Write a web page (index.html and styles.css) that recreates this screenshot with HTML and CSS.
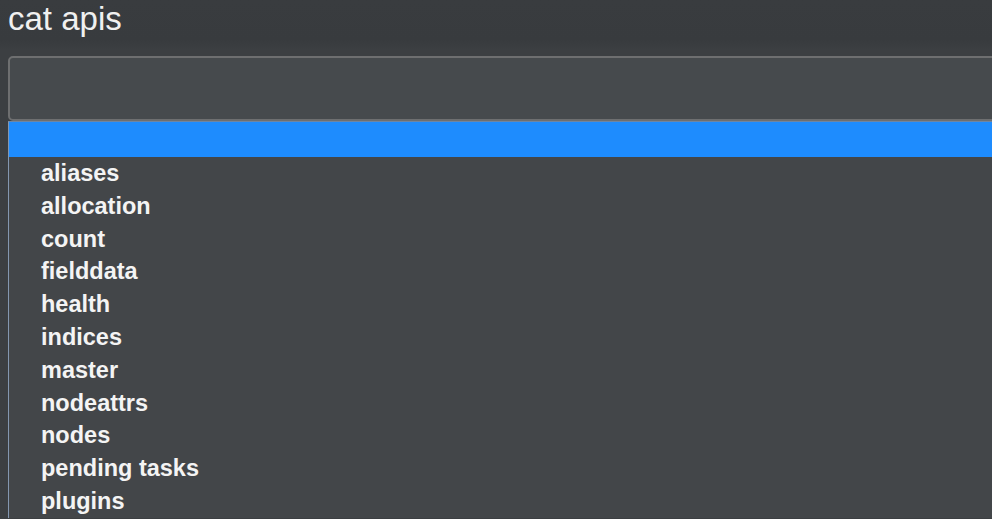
FILE: index.html
```html
<!DOCTYPE html>
<html>
<head>
<meta charset="utf-8">
<link rel="stylesheet" href="styles.css">
</head>
<body>
<div class="page">
  <h1 class="title">cat apis</h1>
  <div class="field"></div>
  <div class="dropdown">
    <div class="opt selected"></div>
    <div class="opt">aliases</div>
    <div class="opt">allocation</div>
    <div class="opt">count</div>
    <div class="opt">fielddata</div>
    <div class="opt">health</div>
    <div class="opt">indices</div>
    <div class="opt">master</div>
    <div class="opt">nodeattrs</div>
    <div class="opt">nodes</div>
    <div class="opt">pending tasks</div>
    <div class="opt">plugins</div>
  </div>
</div>
</body>
</html>
```
FILE: styles.css
```css
html, body {
  margin: 0;
  padding: 0;
  height: 100%;
  overflow: hidden;
}
body {
  background: linear-gradient(#393c3f 0, #383b3e 40px, #3c3f42 50px, #3c3f42 100%);
  font-family: "Liberation Sans", Arial, sans-serif;
  color: #f2f2f2;
}
.page {
  padding-left: 8px;
}
.title {
  margin: 0;
  font-size: 33px;
  font-weight: normal;
  line-height: 38px;
  color: #f0f0f0;
}
.field {
  margin-top: 18px;
  height: 61px;
  width: 1000px;
  border: 2px solid #6e6f70;
  border-radius: 5px;
  background: #464a4d;
}
.dropdown {
  width: 1000px;
  border-left: 1px solid #8497b0;
  border-top: 1px solid #6f86a3;
  background: #434649;
}
.opt {
  height: 32.8px;
  line-height: 32.8px;
  padding-left: 32px;
  font-size: 23.5px;
  font-weight: bold;
  color: #f4f4f4;
}
.opt.selected {
  height: 35px;
  background: #1e8cfe;
}
```
